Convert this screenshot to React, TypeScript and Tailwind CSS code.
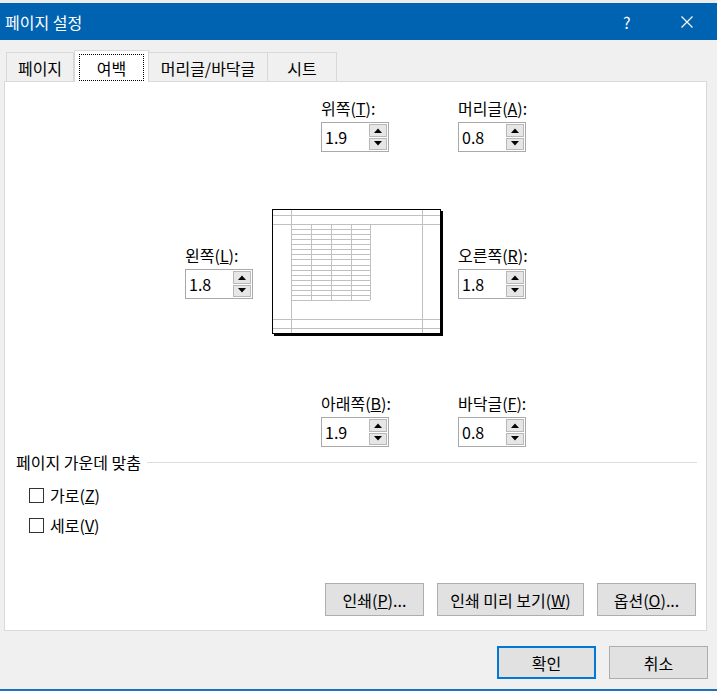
import React from "react"

type SpinProps = { label: string; mn: string; value: string }

const Arrow = ({ up }: { up?: boolean }) => (
	<svg width="8" height="5" viewBox="0 0 8 5">
		<path d={up ? "M0 5 L4 0.5 L8 5 Z" : "M0 0 L4 4.5 L8 0 Z"} fill="#000" />
	</svg>
)

const Spinner = ({ label, mn, value }: SpinProps) => (
	<div className="flex w-[68px] flex-col gap-[4px]">
		<span className="whitespace-nowrap leading-[20px]">
			{label}(<u>{mn}</u>):
		</span>
		<div className="flex h-[30px] items-center border border-[#a9a9a9] bg-white pl-[3px] pr-[1px]">
			<span className="flex-1 leading-[20px]">{value}</span>
			<div className="flex h-[26px] w-[18px] flex-col gap-px">
				<div className="flex flex-1 items-center justify-center border border-[#b8b8b8] bg-[#e6e6e6]">
					<Arrow up />
				</div>
				<div className="flex flex-1 items-center justify-center border border-[#b8b8b8] bg-[#e6e6e6]">
					<Arrow />
				</div>
			</div>
		</div>
	</div>
)

const Preview = () => {
	const rows = Array.from({ length: 16 }, (_, i) => 17 + i * 5.07)
	const cols = [21, 41, 61, 81, 100]
	return (
		<svg width="174" height="130" viewBox="0 0 174 130" shapeRendering="crispEdges">
			<rect x="4" y="4" width="169" height="125" fill="#000" />
			<rect x="2.5" y="2.5" width="168" height="124" fill="#fff" stroke="#000" />
			<g stroke="#c0c0c0" strokeWidth="1">
				<line x1="21.5" y1="3" x2="21.5" y2="126" />
				<line x1="152.5" y1="3" x2="152.5" y2="126" />
				<line x1="3" y1="8.5" x2="170" y2="8.5" />
				<line x1="3" y1="17.5" x2="170" y2="17.5" />
				<line x1="3" y1="112.5" x2="170" y2="112.5" />
				<line x1="3" y1="121.5" x2="170" y2="121.5" />
				{rows.map((y) => (
					<line key={y} x1="21" y1={Math.round(y) + 0.5} x2="100" y2={Math.round(y) + 0.5} />
				))}
				{cols.map((x) => (
					<line key={x} x1={x + 0.5} y1="17" x2={x + 0.5} y2="93" />
				))}
			</g>
		</svg>
	)
}

const Check = ({ label, mn }: { label: string; mn: string }) => (
	<div className="flex items-center gap-[6px] pl-[24px] leading-[20px]">
		<span className="block h-[15px] w-[15px] shrink-0 border border-[#333] bg-white" />
		<span>
			{label}(<u>{mn}</u>)
		</span>
	</div>
)

const Btn = ({ children, w, primary }: { children: React.ReactNode; w: string; primary?: boolean }) => (
	<div
		className={`flex h-[33px] items-center justify-center bg-[#e1e1e1] leading-[20px] ${w} ${
			primary ? "border-2 border-[#0078d7]" : "border border-[#adadad]"
		}`}
	>
		{children}
	</div>
)

export default function App() {
	return (
		<div className="flex h-[691px] w-[717px] flex-col overflow-hidden bg-[#f0f0f0] font-['Noto_Sans_CJK_KR','Noto_Sans',sans-serif] text-[16px] text-black">
			<div className="h-[3px] bg-[#ececec]" />
			<div className="flex h-[37px] items-center bg-[#0063b1] pl-[5px] text-white">
				<span className="flex-1 leading-[20px]">페이지 설정</span>
				<span className="w-[58px] text-[16px] leading-[20px]">?</span>
				<svg width="12" height="12" viewBox="0 0 12 12" className="mr-[24px]">
					<path d="M0.5 0.5 L11.5 11.5 M11.5 0.5 L0.5 11.5" stroke="#fff" strokeWidth="1.2" />
				</svg>
			</div>

			<div className="flex flex-1 flex-col pt-[10px]">
				{/* tabs */}
				<div className="relative z-10 -mb-px flex h-[32px] items-end pl-[6px]">
					<div className="flex h-[30px] w-[68px] items-center justify-center border border-b-0 border-[#d9d9d9] leading-[20px]">
						페이지
					</div>
					<div className="flex h-[32px] w-[75px] items-start justify-center border border-b-0 border-[#d9d9d9] bg-white px-[4px] pt-[3px]">
						<span className="flex h-[27px] w-full items-center justify-center border border-dotted border-black leading-[20px]">
							여백
						</span>
					</div>
					<div className="flex h-[30px] w-[119px] items-center justify-center border border-l-0 border-b-0 border-[#d9d9d9] leading-[20px]">
						머리글/바닥글
					</div>
					<div className="flex h-[30px] w-[69px] items-center justify-center border border-l-0 border-b-0 border-[#d9d9d9] leading-[20px]">
						시트
					</div>
				</div>

				{/* panel */}
				<div className="ml-[4px] mr-[10px] flex h-[550px] flex-col border border-[#d9d9d9] bg-white pt-[16px] pb-[14px]">
					<div className="flex gap-[69px] pl-[316px]">
						<Spinner label="위쪽" mn="T" value="1.9" />
						<Spinner label="머리글" mn="A" value="0.8" />
					</div>

					<div className="mt-[55px] flex items-start pl-[180px]">
						<div className="mt-[38px]">
							<Spinner label="왼쪽" mn="L" value="1.8" />
						</div>
						<div className="ml-[17px]">
							<Preview />
						</div>
						<div className="ml-[14px] mt-[38px]">
							<Spinner label="오른쪽" mn="R" value="1.8" />
						</div>
					</div>

					<div className="mt-[56px] flex gap-[69px] pl-[316px]">
						<Spinner label="아래쪽" mn="B" value="1.9" />
						<Spinner label="바닥글" mn="F" value="0.8" />
					</div>

					<div className="mt-[5px] flex items-center gap-[6px] pl-[11px] pr-[9px]">
						<span className="leading-[20px]">페이지 가운데 맞춤</span>
						<span className="h-px flex-1 bg-[#dcdcdc]" />
					</div>
					<div className="mt-[13px]">
						<Check label="가로" mn="Z" />
					</div>
					<div className="mt-[10px]">
						<Check label="세로" mn="V" />
					</div>

					<div className="mt-auto flex justify-end gap-[13px] pr-[10px]">
						<Btn w="w-[99px]">
							인쇄(<u>P</u>)...
						</Btn>
						<Btn w="w-[147px]">
							인쇄 미리 보기(<u>W</u>)
						</Btn>
						<Btn w="w-[99px]">
							옵션(<u>O</u>)...
						</Btn>
					</div>
				</div>

				<div className="mt-[15px] flex justify-end gap-[13px] pr-[9px]">
					<Btn w="w-[99px]" primary>
						확인
					</Btn>
					<Btn w="w-[99px]">취소</Btn>
				</div>
			</div>
			<div className="h-[2px] bg-[#1f6fbf]" />
		</div>
	)
}
